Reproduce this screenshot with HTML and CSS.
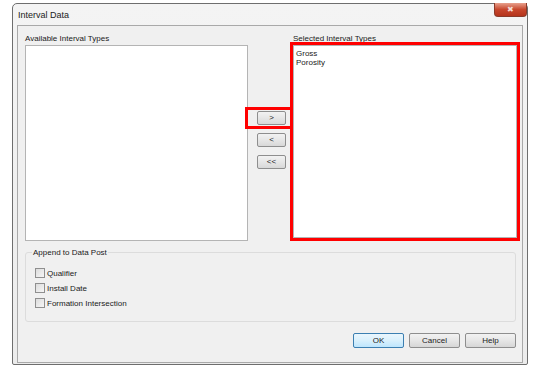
FILE: index.html
```html
<!DOCTYPE html>
<html lang="en">
<head>
    <meta charset="UTF-8">
    <title>Interval Data</title>
    <link rel="stylesheet" href="styles.css">
</head>
<body>
    <div class="window">
        <div class="titlebar">
            <span class="title">Interval Data</span>
            <div class="close-btn">&#x2716;</div>
        </div>
        <div class="client">
            <div class="lists">
                <div class="col-left">
                    <div class="list-label">Available Interval Types</div>
                    <div class="listbox"></div>
                </div>
                <div class="col-mid">
                    <button class="move-btn highlighted">&gt;</button>
                    <button class="move-btn">&lt;</button>
                    <button class="move-btn">&lt;&lt;</button>
                </div>
                <div class="col-right">
                    <div class="list-label">Selected Interval Types</div>
                    <div class="listbox highlighted">
                        <div class="item">Gross</div>
                        <div class="item">Porosity</div>
                    </div>
                </div>
            </div>

            <fieldset class="group">
                <legend>Append to Data Post</legend>
                <label class="check"><span class="box"></span>Qualifier</label>
                <label class="check"><span class="box"></span>Install Date</label>
                <label class="check"><span class="box"></span>Formation Intersection</label>
            </fieldset>

            <div class="footer">
                <button class="dlg-btn default">OK</button>
                <button class="dlg-btn">Cancel</button>
                <button class="dlg-btn">Help</button>
            </div>
        </div>
    </div>
</body>
</html>
```

FILE: styles.css
```css
body {
    margin: 0;
    padding: 0;
    background-color: #ffffff;
    font-family: "Liberation Sans", Arial, sans-serif;
    font-size: 8px;
    color: #1a1a1a;
}

.window {
    margin: 3px 0 0 12px;
    width: 506px;
    height: 356px;
    border: 1px solid #6e6e6e;
    border-radius: 5px 5px 2px 2px;
    background: linear-gradient(#f4f4f4, #ececec);
    padding: 0 4px 4px 4px;
    box-sizing: content-box;
}

.titlebar {
    height: 21px;
    position: relative;
    display: flex;
    align-items: center;
}
.title {
    font-size: 9px;
    margin-left: 1px;
    color: #222;
}
.close-btn {
    position: absolute;
    top: -1px;
    right: -4px;
    width: 33px;
    height: 14px;
    border: 1px solid #8a3a2a;
    border-top: none;
    border-radius: 0 0 4px 4px;
    background: linear-gradient(#e8a08c, #c7472d 50%, #b5341c);
    color: #f4dcd6;
    font-size: 8px;
    text-align: center;
    line-height: 13px;
    box-sizing: border-box;
}

.client {
    border: 1px solid #a9a9a9;
    background-color: #f0f0f0;
    height: 329px;
    padding: 7px 5px 0 7px;
    box-sizing: content-box;
    display: flex;
    flex-direction: column;
}

.lists {
    display: flex;
    height: 208px;
}
.list-label {
    height: 11px;
    line-height: 11px;
    margin-bottom: 1px;
}
.col-left {
    width: 223px;
}
.col-right {
    width: 224px;
    margin-left: auto;
}
.listbox {
    height: 196px;
    background: #fff;
    border: 1px solid #b4b4b4;
    box-sizing: border-box;
    padding: 3px 2px;
}
.col-right .listbox {
    height: 193px;
}
.item {
    line-height: 9px;
}

.col-mid {
    display: flex;
    flex-direction: column;
    align-items: flex-start;
    padding: 78px 0 0 9px;
    gap: 8px;
}
.move-btn {
    width: 29px;
    height: 14px;
    padding: 0;
    border: 1px solid #8e8e8e;
    border-radius: 2px;
    background: linear-gradient(#f2f2f2, #e6e6e6 50%, #d8d8d8);
    font-family: "Liberation Sans", Arial, sans-serif;
    font-size: 8px;
    color: #222;
    line-height: 12px;
}

.highlighted {
    position: relative;
}
.highlighted::after {
    content: "";
    position: absolute;
    border: 3px solid #ff0000;
}
.move-btn.highlighted::after {
    top: -5px;
    bottom: -5px;
    left: -13px;
    right: -8px;
}
.listbox.highlighted::after {
    top: -4px;
    bottom: -4px;
    left: -4px;
    right: -4px;
}

.group {
    margin: 7px 1px 0 0;
    padding: 11px 0 0 9px;
    height: 74px;
    box-sizing: border-box;
    border: 1px solid #dcdcdc;
    border-radius: 3px;
    display: flex;
    flex-direction: column;
    gap: 5px;
}
.group legend {
    padding: 0 1px;
    margin-left: -3px;
    line-height: 9px;
}
.check {
    display: flex;
    align-items: center;
    height: 10px;
}
.box {
    width: 8px;
    height: 8px;
    border: 1px solid #8f8f8f;
    background: linear-gradient(135deg, #dcdcdc, #f6f6f6);
    margin-right: 2px;
}

.footer {
    display: flex;
    justify-content: flex-end;
    gap: 5px;
    margin-top: 11px;
    padding-right: 1px;
}
.dlg-btn {
    width: 51px;
    height: 15px;
    padding: 0;
    border: 1px solid #8e8e8e;
    border-radius: 2px;
    background: linear-gradient(#f2f2f2, #e6e6e6 50%, #d6d6d6);
    font-family: "Liberation Sans", Arial, sans-serif;
    font-size: 8px;
    color: #222;
}
.dlg-btn.default {
    border-color: #3c7fb1;
    background: linear-gradient(#eaf6fd, #d9f0fc 50%, #bee6fd);
}
```
